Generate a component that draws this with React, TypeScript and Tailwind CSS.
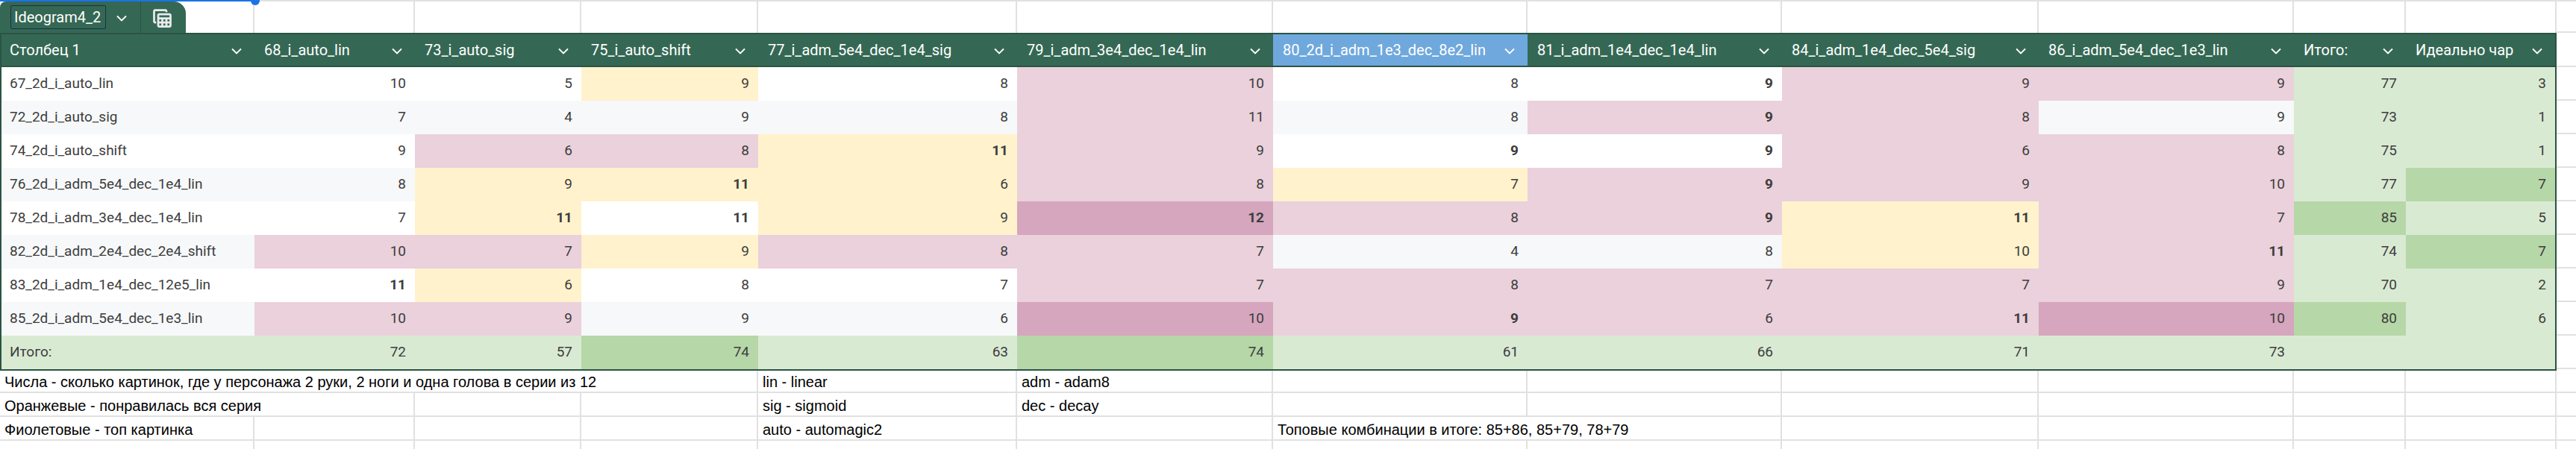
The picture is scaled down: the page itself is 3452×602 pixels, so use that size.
import React from "react";

// cell codes: value + tone letter + "b" for bold
// p = light magenta, d = magenta, y = light yellow, L = light green, K = green
const TONE: Record<string, string> = {
  p: "bg-[#ead1dc]",
  d: "bg-[#d5a6bd]",
  y: "bg-[#fff2cc]",
  L: "bg-[#d9ead3]",
  K: "bg-[#b6d7a8]",
};

const WIDTHS = [
  "w-[339px]",
  "w-[215px]",
  "w-[223px]",
  "w-[237px]",
  "w-[347px]",
  "w-[343px]",
  "w-[341px]",
  "w-[341px]",
  "w-[344px]",
  "w-[342px]",
  "w-[150px]",
  "w-[200px]",
];

// same grid outside the table (first column includes the 2px table border)
const OUTER = [
  "w-[341px]",
  "w-[215px]",
  "w-[223px]",
  "w-[237px]",
  "w-[347px]",
  "w-[343px]",
  "w-[341px]",
  "w-[341px]",
  "w-[344px]",
  "w-[342px]",
  "w-[150px]",
  "w-[202px]",
];

const HEADERS = [
  "Столбец 1",
  "68_i_auto_lin",
  "73_i_auto_sig",
  "75_i_auto_shift",
  "77_i_adm_5e4_dec_1e4_sig",
  "79_i_adm_3e4_dec_1e4_lin",
  "80_2d_i_adm_1e3_dec_8e2_lin",
  "81_i_adm_1e4_dec_1e4_lin",
  "84_i_adm_1e4_dec_5e4_sig",
  "86_i_adm_5e4_dec_1e3_lin",
  "Итого:",
  "Идеально чар",
];

const ROWS: { label: string; cells: string[] }[] = [
  { label: "67_2d_i_auto_lin", cells: ["10", "5", "9y", "8", "10p", "8", "9b", "9p", "9p", "77L", "3L"] },
  { label: "72_2d_i_auto_sig", cells: ["7", "4", "9", "8", "11p", "8", "9pb", "8p", "9", "73L", "1L"] },
  { label: "74_2d_i_auto_shift", cells: ["9", "6p", "8p", "11yb", "9p", "9b", "9b", "6p", "8p", "75L", "1L"] },
  { label: "76_2d_i_adm_5e4_dec_1e4_lin", cells: ["8", "9y", "11yb", "6y", "8p", "7y", "9pb", "9p", "10p", "77L", "7K"] },
  { label: "78_2d_i_adm_3e4_dec_1e4_lin", cells: ["7", "11yb", "11b", "9y", "12db", "8p", "9pb", "11yb", "7p", "85K", "5L"] },
  { label: "82_2d_i_adm_2e4_dec_2e4_shift", cells: ["10p", "7p", "9y", "8p", "7p", "4", "8", "10y", "11pb", "74L", "7K"] },
  { label: "83_2d_i_adm_1e4_dec_12e5_lin", cells: ["11b", "6y", "8", "7", "7p", "8p", "7p", "7p", "9p", "70L", "2L"] },
  { label: "85_2d_i_adm_5e4_dec_1e3_lin", cells: ["10p", "9p", "9", "6", "10d", "9pb", "6p", "11pb", "10d", "80K", "6L"] },
];

const TOTAL = ["72L", "57L", "74K", "63L", "74K", "61L", "66L", "71L", "73L", "L", "L"];

type Note = { w: string; t?: string };

const NOTES: { h: string; cells: Note[] }[] = [
  {
    h: "h-[30px]",
    cells: [
      { w: "w-[1016px]", t: "Числа - сколько картинок, где у персонажа 2 руки, 2 ноги и одна голова в серии из 12" },
      { w: "w-[347px]", t: "lin - linear" },
      { w: "w-[343px]", t: "adm - adam8" },
      { w: "w-[341px]" },
      { w: "w-[341px]" },
      { w: "w-[344px]" },
      { w: "w-[342px]" },
      { w: "w-[150px]" },
      { w: "w-[202px]" },
    ],
  },
  {
    h: "h-[32px]",
    cells: [
      { w: "w-[556px]", t: "Оранжевые - понравилась вся серия" },
      { w: "w-[223px]" },
      { w: "w-[237px]" },
      { w: "w-[347px]", t: "sig - sigmoid" },
      { w: "w-[343px]", t: "dec - decay" },
      { w: "w-[341px]" },
      { w: "w-[341px]" },
      { w: "w-[344px]" },
      { w: "w-[342px]" },
      { w: "w-[150px]" },
      { w: "w-[202px]" },
    ],
  },
  {
    h: "h-[32px]",
    cells: [
      { w: "w-[341px]", t: "Фиолетовые - топ картинка" },
      { w: "w-[215px]" },
      { w: "w-[223px]" },
      { w: "w-[237px]" },
      { w: "w-[347px]", t: "auto - automagic2" },
      { w: "w-[343px]" },
      { w: "w-[682px]", t: "Топовые комбинации в итоге: 85+86, 85+79, 78+79" },
      { w: "w-[344px]" },
      { w: "w-[342px]" },
      { w: "w-[150px]" },
      { w: "w-[202px]" },
    ],
  },
  {
    h: "h-[40px]",
    cells: OUTER.map((w) => ({ w })),
  },
];

function parse(code: string) {
  const m = code.match(/^(\d*)([pdyLK]?)(b?)$/);
  return { value: m?.[1] ?? "", tone: m?.[2] ?? "", bold: m?.[3] === "b" };
}

function Chevron() {
  return (
    <svg width="14" height="9" viewBox="0 0 14 9" fill="none" className="shrink-0">
      <path d="M1 1.5l6 6 6-6" stroke="white" strokeWidth="1.8" />
    </svg>
  );
}

function TableViewIcon() {
  return (
    <svg width="33" height="33" viewBox="0 0 24 24" fill="#e8eaed">
      <path d="M19,7H9C7.9,7,7,7.9,7,9v10c0,1.1,0.9,2,2,2h10c1.1,0,2-0.9,2-2V9C21,7.9,20.1,7,19,7z M19,9v2H9V9H19z M13,15v-2h2v2H13z M15,17v2h-2v-2H15z M11,15H9v-2h2V15z M17,13h2v2h-2V13z M9,17h2v2H9V17z M17,19v-2h2v2H17z M6,17H5c-1.1,0-2-0.9-2-2V5c0-1.1,0.9-2,2-2h10c1.1,0,2,0.9,2,2v1h-2V5H5v10h1V17z" />
    </svg>
  );
}

export default function App() {
  return (
    <div className="relative w-[3452px] h-[602px] overflow-hidden bg-white font-['Roboto',sans-serif]">
      {/* selected cell edge above the table */}
      <div className="absolute left-0 top-0 z-10 h-[2px] w-[342px] bg-[#1a73e8]" />
      <div className="absolute left-[336px] top-[-5px] z-10 h-[12px] w-[12px] rounded-full bg-[#1a73e8]" />

      {/* table name tab row */}
      <div className="flex h-[44px] border-t-2 border-[#e1e1e1]">
        <div className="w-[341px] shrink-0 border-r-2 border-[#e1e1e1]">
          <div className="flex h-[42px] w-[249px] items-center rounded-tl-[8px] rounded-tr-[16px] bg-[#356854]">
            <div className="ml-[14px] flex h-[32px] w-[128px] items-center rounded-[2px] border border-[#16304f] pl-[4px] text-[20px] text-white">
              Ideogram4_2
            </div>
            <div className="ml-[14px] mt-[2px]">
              <Chevron />
            </div>
            <div className="ml-[18px] h-full w-px bg-[#2a5443]" />
            <div className="ml-[12px] mt-[2px]">
              <TableViewIcon />
            </div>
          </div>
        </div>
        {OUTER.slice(1).map((w, i) => (
          <div key={i} className={`${w} shrink-0 border-r-2 border-[#e1e1e1]`} />
        ))}
        <div className="flex-1 border-b-2 border-[#e1e1e1]" />
      </div>

      <div className="flex">
        <div className="w-[3426px] shrink-0 border-2 border-[#2a5443] text-[19px] text-[#3d3d3d]">
          {/* header */}
          <div className="flex h-[44px] border-b-2 border-[#2a5443] bg-[#356854] text-[20px] text-white">
            {HEADERS.map((h, i) => (
              <div
                key={h}
                className={`${WIDTHS[i]} ${i === 6 ? "bg-[#6fa8dc]" : ""} ${
                  i === 0 ? "pl-[11px]" : "pl-[13px]"
                } flex shrink-0 items-center justify-between gap-[8px] pr-[17px]`}
              >
                <span className="overflow-hidden whitespace-nowrap">{h}</span>
                <div className="mt-[3px]">
                  <Chevron />
                </div>
              </div>
            ))}
          </div>

          {ROWS.map((row, r) => {
            const base = r % 2 === 0 ? "bg-white" : "bg-[#f6f8f9]";
            return (
              <div key={row.label} className={`flex h-[45px] ${base}`}>
                <div className={`${WIDTHS[0]} flex shrink-0 items-center whitespace-nowrap pl-[11px]`}>
                  {row.label}
                </div>
                {row.cells.map((c, i) => {
                  const { value, tone, bold } = parse(c);
                  return (
                    <div
                      key={i}
                      className={`${WIDTHS[i + 1]} ${tone ? TONE[tone] : ""} ${
                        bold ? "font-bold" : ""
                      } flex shrink-0 items-center justify-end pr-[12px]`}
                    >
                      {value}
                    </div>
                  );
                })}
              </div>
            );
          })}

          {/* totals */}
          <div className="flex h-[45px] bg-[#d9ead3]">
            <div className={`${WIDTHS[0]} flex shrink-0 items-center pl-[11px]`}>Итого:</div>
            {TOTAL.map((c, i) => {
              const { value, tone } = parse(c);
              return (
                <div
                  key={i}
                  className={`${WIDTHS[i + 1]} ${TONE[tone]} flex shrink-0 items-center justify-end pr-[12px]`}
                >
                  {value}
                </div>
              );
            })}
          </div>
        </div>

        {/* grid to the right of the table */}
        <div className="flex flex-1 flex-col">
          <div className="h-[46px] border-b-2 border-[#e1e1e1]" />
          {Array.from({ length: 9 }).map((_, i) => (
            <div key={i} className="h-[45px] border-b-2 border-[#e1e1e1]" />
          ))}
        </div>
      </div>

      {/* notes below the table */}
      <div className="font-['Liberation_Sans',Arial,sans-serif] text-[20px] leading-[23px] text-black">
        {NOTES.map((row, r) => (
          <div key={r} className={`flex ${row.h} border-b-2 border-[#e1e1e1]`}>
            {row.cells.map((c, i) => (
              <div
                key={i}
                className={`${c.w} flex shrink-0 items-end whitespace-nowrap border-r-2 border-[#e1e1e1] pb-[1px] pl-[6px]`}
              >
                {c.t}
              </div>
            ))}
            <div className="flex-1" />
          </div>
        ))}
      </div>
    </div>
  );
}
